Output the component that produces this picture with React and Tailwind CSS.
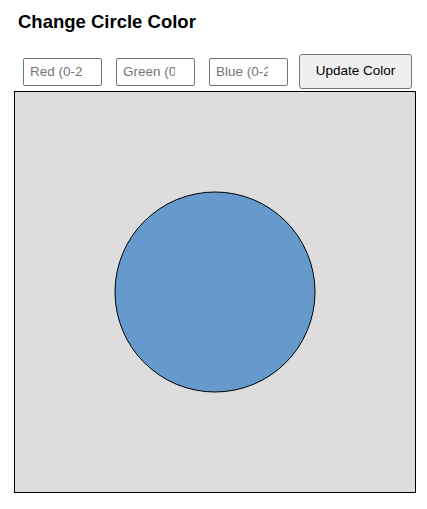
import React, { useState } from "react";

export default function App() {
  const [rgb, setRgb] = useState({ r: "", g: "", b: "" });
  const [fill, setFill] = useState("#6699cc");

  const update = () => {
    const c = (v) => Math.max(0, Math.min(255, parseInt(v) || 0));
    setFill(`rgb(${c(rgb.r)}, ${c(rgb.g)}, ${c(rgb.b)})`);
  };

  const inputCls =
    "w-[79px] h-[28px] border border-[#767676] rounded-[2px] pl-[6px] pr-[19px] text-[13.5px] text-black placeholder:text-[#757575] outline-none bg-white";

  return (
    <div className="min-h-screen bg-white font-['Liberation_Sans',Arial,sans-serif]">
      <h3 className="pl-[18px] pt-[11px] text-[18.5px] font-bold text-black leading-[22px]">
        Change Circle Color
      </h3>
      <div className="flex items-center mt-[21px] pl-[23px]">
        <input
          className={inputCls}
          placeholder="Red (0-255)"
          value={rgb.r}
          onChange={(e) => setRgb({ ...rgb, r: e.target.value })}
        />
        <input
          className={inputCls + " ml-[14px]"}
          placeholder="Green (0-255)"
          value={rgb.g}
          onChange={(e) => setRgb({ ...rgb, g: e.target.value })}
        />
        <input
          className={inputCls + " ml-[14px]"}
          placeholder="Blue (0-255)"
          value={rgb.b}
          onChange={(e) => setRgb({ ...rgb, b: e.target.value })}
        />
        <button
          onClick={update}
          className="ml-[11px] w-[113px] h-[35px] bg-[#efefef] border border-[#767676] rounded-[3px] text-[13.5px] text-black"
        >
          Update Color
        </button>
      </div>
      <div className="ml-[14px] mt-[2px] w-[402px] h-[402px] border border-black bg-[#dddddd]">
        <svg width="400" height="400" viewBox="0 0 400 400">
          <circle cx="200" cy="200" r="100" fill={fill} stroke="black" strokeWidth="1" />
        </svg>
      </div>
    </div>
  );
}
